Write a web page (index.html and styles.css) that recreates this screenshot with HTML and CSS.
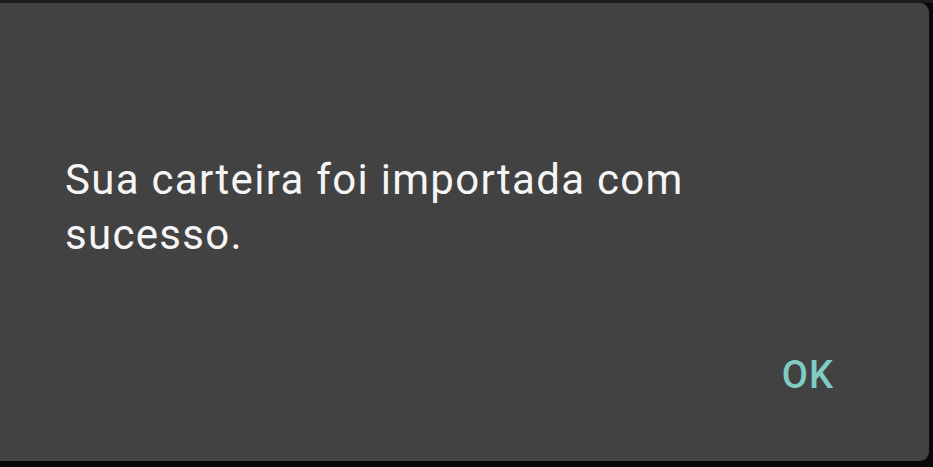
FILE: index.html
```html
<!DOCTYPE html>
<html lang="pt">
<head>
<meta charset="utf-8">
<link rel="stylesheet" href="styles.css">
</head>
<body>
<div class="screen">
  <div class="dialog">
    <p class="message">Sua carteira foi importada com sucesso.</p>
    <div class="actions">
      <button class="ok">OK</button>
    </div>
  </div>
</div>
</body>
</html>
```

FILE: styles.css
```css
html, body {
  margin: 0;
  padding: 0;
  background: #0d0d0d;
}
.screen {
  width: 933px;
  height: 467px;
  overflow: hidden;
  background: linear-gradient(#1c1c1c 0, #1c1c1c 3px, #080808 3px);
  padding-top: 3px;
  box-sizing: border-box;
}
.dialog {
  width: 929px;
  height: 458px;
  background: #424242;
  border-radius: 0 9px 9px 0;
  box-sizing: border-box;
  display: flex;
  flex-direction: column;
  padding: 149px 0 0 65px;
  font-family: Roboto, "Noto Sans", sans-serif;
}
.message {
  margin: 0;
  width: 700px;
  color: #f5f5f5;
  font-size: 42px;
  line-height: 55px;
  letter-spacing: 1.3px;
  font-weight: 400;
}
.actions {
  display: flex;
  justify-content: flex-end;
  padding-right: 95px;
  margin-top: 93px;
}
.ok {
  background: none;
  border: 0;
  padding: 0;
  color: #80cbc4;
  font-family: Roboto, sans-serif;
  font-weight: 500;
  font-size: 38px;
  line-height: 40px;
  letter-spacing: 1px;
}
```
